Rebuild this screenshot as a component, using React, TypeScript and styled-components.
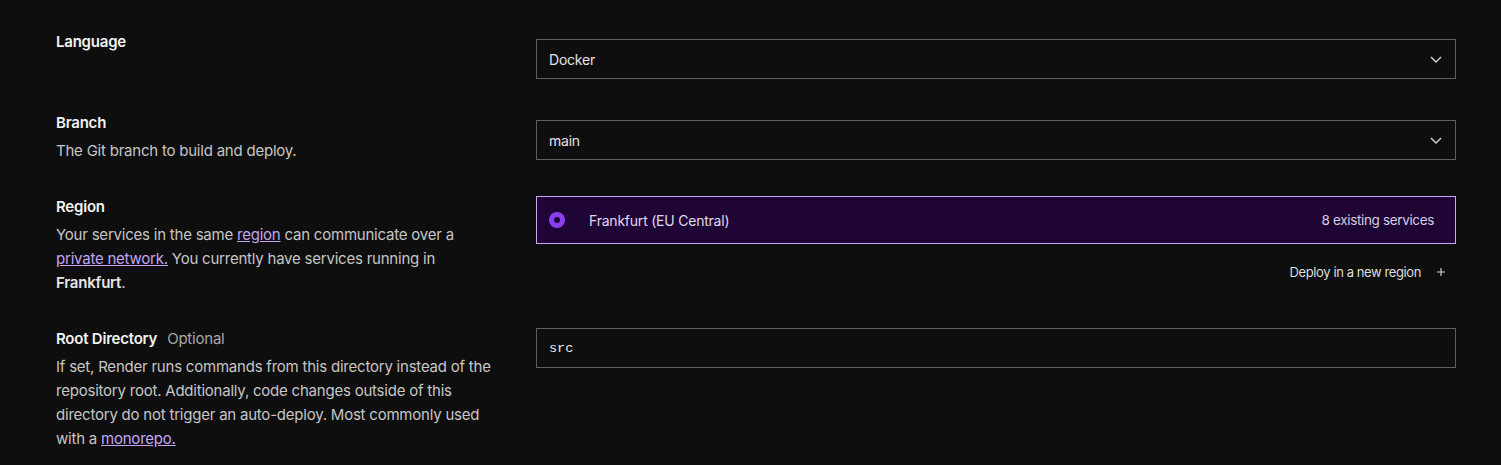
import React from "react";
import styled, { createGlobalStyle } from "styled-components";

const Global = createGlobalStyle`
  html, body { margin: 0; padding: 0; background: #0e0e0e; }
  body { font-family: Inter, "Noto Sans", sans-serif; color: #e8e8e8; -webkit-font-smoothing: antialiased; letter-spacing: -0.22px; }
`;

const Page = styled.div`
  background: #0e0e0e;
  height: 465px;
  overflow: hidden;
  box-sizing: border-box;
  padding: 30px 45px 0 56px;
  display: flex;
  flex-direction: column;
  gap: 32px;
`;

const Row = styled.div`
  display: grid;
  grid-template-columns: 440px 1fr;
  column-gap: 40px;
  align-items: start;
`;

const Info = styled.div`
  display: flex;
  flex-direction: column;
`;

const Label = styled.div`
  font-size: 15px;
  font-weight: 600;
  line-height: 24px;
  color: #f2f2f2;
  display: flex;
  gap: 10px;
`;

const Optional = styled.span`
  font-weight: 400;
  color: #a8a8a8;
`;

const Desc = styled.p`
  margin: 4px 0 0;
  font-size: 15px;
  line-height: 24px;
  color: #c6c6c6;
  b { color: #e6e6e6; font-weight: 600; }
`;

const Link = styled.a`
  color: #c3a6f5;
  text-decoration: underline;
  text-underline-offset: 1px;
  cursor: pointer;
`;

const Control = styled.div<{ $offset?: number }>`
  margin-top: ${(p) => p.$offset ?? 0}px;
  display: flex;
  flex-direction: column;
`;

const Select = styled.div`
  height: 40px;
  box-sizing: border-box;
  border: 1px solid #5e5e5e;
  display: flex;
  align-items: center;
  justify-content: space-between;
  padding: 0 13px 0 12px;
  font-size: 14px;
  color: #e4e4e4;
`;

const Input = styled.div`
  height: 40px;
  box-sizing: border-box;
  border: 1px solid #5e5e5e;
  display: flex;
  align-items: center;
  padding: 0 12px;
  font-family: "Liberation Mono", "DejaVu Sans Mono", monospace;
  font-size: 13.5px;
  letter-spacing: 0;
  color: #ececec;
`;

const RegionCard = styled.div`
  height: 48px;
  box-sizing: border-box;
  border: 1px solid #c9a6f7;
  background: #1f0536;
  display: flex;
  align-items: center;
  padding: 0 21px 0 12px;
  font-size: 14px;
  color: #e0d8ea;
`;

const Radio = styled.span`
  width: 16px;
  height: 16px;
  border-radius: 50%;
  background: #8b3ff5;
  display: flex;
  align-items: center;
  justify-content: center;
  margin-right: 24px;
  &::after {
    content: "";
    width: 6px;
    height: 6px;
    border-radius: 50%;
    background: #1f0536;
  }
`;

const RegionName = styled.span`
  flex: 1;
`;

const Count = styled.span`
  font-size: 13.5px;
  letter-spacing: -0.35px;
  color: #d6cde0;
`;

const DeployNew = styled.div`
  margin-top: 20px;
  display: flex;
  justify-content: flex-end;
  align-items: center;
  gap: 15px;
  padding-right: 10px;
  font-size: 13px;
  letter-spacing: -0.4px;
  color: #dedede;
`;

const Chevron = () => (
  <svg width="12" height="7" viewBox="0 0 12 7" fill="none">
    <path d="M1 1l5 5 5-5" stroke="#d8d8d8" strokeWidth="1.4" />
  </svg>
);

const Plus = () => (
  <svg width="10" height="10" viewBox="0 0 10 10" fill="none">
    <path d="M5 1v8M1 5h8" stroke="#cfcfcf" strokeWidth="1.2" />
  </svg>
);

export default function App() {
  return (
    <>
      <Global />
      <Page>
        <Row>
          <Info>
            <Label>Language</Label>
          </Info>
          <Control $offset={9}>
            <Select>
              <span>Docker</span>
              <Chevron />
            </Select>
          </Control>
        </Row>
        <Row>
          <Info>
            <Label>Branch</Label>
            <Desc>The Git branch to build and deploy.</Desc>
          </Info>
          <Control $offset={9}>
            <Select>
              <span>main</span>
              <Chevron />
            </Select>
          </Control>
        </Row>
        <Row>
          <Info>
            <Label>Region</Label>
            <Desc>
              Your services in the same <Link>region</Link> can communicate over a{" "}
              <Link>private network.</Link> You currently have services running in{" "}
              <b>Frankfurt</b>.
            </Desc>
          </Info>
          <Control $offset={1}>
            <RegionCard>
              <Radio />
              <RegionName>Frankfurt (EU Central)</RegionName>
              <Count>8 existing services</Count>
            </RegionCard>
            <DeployNew>
              <span>Deploy in a new region</span>
              <Plus />
            </DeployNew>
          </Control>
        </Row>
        <Row>
          <Info>
            <Label>
              Root Directory <Optional>Optional</Optional>
            </Label>
            <Desc>
              If set, Render runs commands from this directory instead of the repository root.
              Additionally, code changes outside of this directory do not trigger an auto-deploy.
              Most commonly used with a <Link>monorepo.</Link>
            </Desc>
          </Info>
          <Control $offset={1}>
            <Input>src</Input>
          </Control>
        </Row>
      </Page>
    </>
  );
}
